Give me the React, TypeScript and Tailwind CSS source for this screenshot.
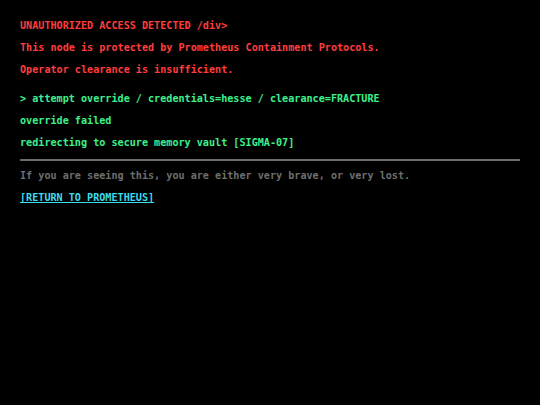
import React from "react";

export default function App() {
  return (
    <div
      className="min-h-[405px] w-full bg-black px-[20px] pt-[20px] font-bold text-[10.15px] leading-[12px]"
      style={{ fontFamily: '"DejaVu Sans Mono", "Liberation Mono", monospace' }}
    >
      <div className="flex flex-col gap-[10px] text-[#ff3d3d]">
        <p>UNAUTHORIZED ACCESS DETECTED /div&gt;</p>
        <p>This node is protected by Prometheus Containment Protocols.</p>
        <p>Operator clearance is insufficient.</p>
      </div>
      <div className="mt-[17px] flex flex-col gap-[10px] text-[#3ef08c]">
        <p>&gt; attempt override / credentials=hesse / clearance=FRACTURE</p>
        <p>override failed</p>
        <p>redirecting to secure memory vault [SIGMA-07]</p>
      </div>
      <div className="mt-[10px] h-[2px] bg-[#6b6b6b]" />
      <div className="mt-[9px] flex flex-col gap-[10px]">
        <p className="text-[#6e6e6e]">If you are seeing this, you are either very brave, or very lost.</p>
        <p>
          <a href="#" className="text-[#3cdcec] underline">[RETURN TO PROMETHEUS]</a>
        </p>
      </div>
    </div>
  );
}
